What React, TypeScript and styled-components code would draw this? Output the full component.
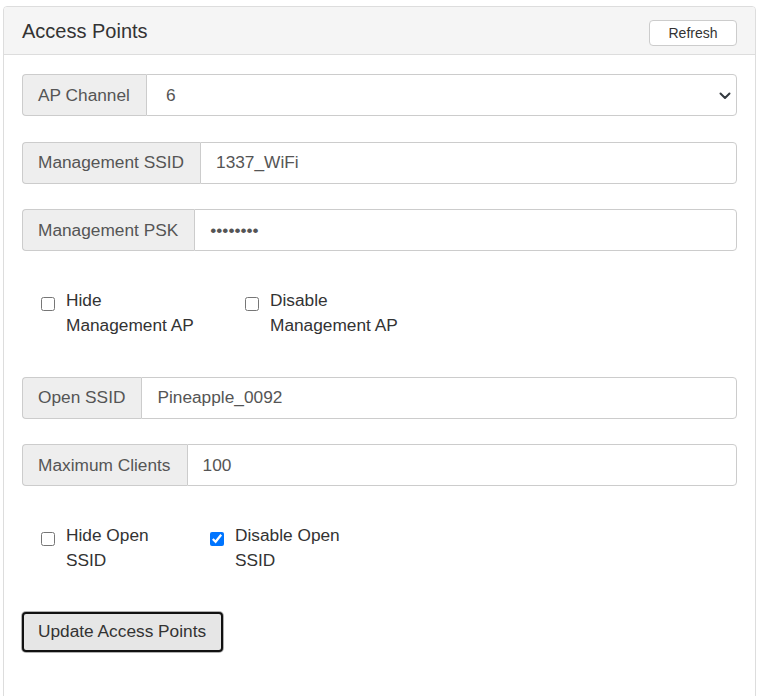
import React from "react";
import styled, { createGlobalStyle } from "styled-components";

const Global = createGlobalStyle`
  html, body { margin: 0; padding: 0; background: #fff; }
  body { font-family: "Liberation Sans", Arial, sans-serif; color: #333; }
  * { box-sizing: border-box; }
`;

const Page = styled.div`
  padding: 6px 3px 0 3px;
  height: 696px;
  overflow: hidden;
`;

const Panel = styled.div`
  border: 1px solid #ddd;
  border-radius: 4px;
  background: #fff;
`;

const Heading = styled.div`
  display: flex;
  align-items: flex-start;
  justify-content: space-between;
  background: #f5f5f5;
  border-bottom: 1px solid #ddd;
  border-radius: 3px 3px 0 0;
  padding: 13px 18px 8px 18px;
`;

const Title = styled.h3`
  margin: 0;
  font-size: 20px;
  line-height: 22px;
  font-weight: 400;
  color: #333;
`;

const SmallButton = styled.button`
  width: 88px;
  height: 26px;
  padding: 0;
  background: #fff;
  border: 1px solid #ccc;
  border-radius: 4px;
  font-family: inherit;
  font-size: 14px;
  color: #333;
`;

const Body = styled.div`
  padding: 19px 18px 60px 18px;
`;

const Group = styled.div`
  display: flex;
  height: 42px;
  margin-bottom: 25.5px;
`;

const Addon = styled.span`
  display: flex;
  align-items: center;
  padding: 0 16px 0 15px;
  background: #eee;
  border: 1px solid #ccc;
  border-right: 0;
  border-radius: 4px 0 0 4px;
  font-size: 17.3px;
  color: #555;
  white-space: nowrap;
`;

const TextInput = styled.input`
  flex: 1;
  min-width: 0;
  height: 100%;
  padding: 0 15px;
  border: 1px solid #ccc;
  border-radius: 0 4px 4px 0;
  font-family: inherit;
  font-size: 17.3px;
  color: #555;
  background: #fff;
  outline: none;
`;

const SelectWrap = styled.div`
  position: relative;
  flex: 1;
  height: 100%;
`;

const Select = styled.select`
  appearance: none;
  -webkit-appearance: none;
  width: 100%;
  height: 100%;
  padding: 0 40px 0 19px;
  border: 1px solid #ccc;
  border-radius: 0 4px 4px 0;
  font-family: inherit;
  font-size: 17.3px;
  color: #555;
  background: #fff;
  outline: none;
`;

const Chevron = styled.svg`
  position: absolute;
  right: 6px;
  top: 18px;
  pointer-events: none;
`;

const CheckRow = styled.div`
  display: flex;
  padding: 11px 0 13.5px 19px;
  margin-bottom: 25.5px;
`;

const CheckItem = styled.label<{ $w?: number }>`
  display: flex;
  align-items: flex-start;
  gap: 11px;
  width: ${(p) => (p.$w ? `${p.$w}px` : "auto")};
  font-size: 17.3px;
  line-height: 25px;
  color: #333;
`;

const Box = styled.input`
  width: 14px;
  height: 14px;
  margin: 9px 0 0 0;
  flex: none;
`;

const UpdateButton = styled.button`
  display: block;
  height: 40px;
  padding: 0 15px 0 14px;
  background: #e6e6e6;
  border: 2px solid #111;
  box-shadow: 0 0 0 1px #b0b0b0;
  border-radius: 4px;
  font-family: inherit;
  font-size: 17.3px;
  color: #333;
`;

export default function App() {
  return (
    <>
      <Global />
      <Page>
        <Panel>
          <Heading>
            <Title>Access Points</Title>
            <SmallButton>Refresh</SmallButton>
          </Heading>
          <Body>
            <Group>
              <Addon>AP Channel</Addon>
              <SelectWrap>
                <Select defaultValue="6">
                  {[1, 2, 3, 4, 5, 6, 7, 8, 9, 10, 11].map((c) => (
                    <option key={c} value={String(c)}>
                      {c}
                    </option>
                  ))}
                </Select>
                <Chevron width="12" height="8" viewBox="0 0 12 8">
                  <path d="M1.5 1.5 L6 6 L10.5 1.5" fill="none" stroke="#343a40" strokeWidth="2" strokeLinecap="round" strokeLinejoin="round" />
                </Chevron>
              </SelectWrap>
            </Group>
            <Group>
              <Addon>Management SSID</Addon>
              <TextInput type="text" defaultValue="1337_WiFi" />
            </Group>
            <Group>
              <Addon>Management PSK</Addon>
              <TextInput type="password" defaultValue="pineappl" />
            </Group>
            <CheckRow>
              <CheckItem $w={204}>
                <Box type="checkbox" />
                <span>
                  Hide
                  <br />
                  Management AP
                </span>
              </CheckItem>
              <CheckItem>
                <Box type="checkbox" />
                <span>
                  Disable
                  <br />
                  Management AP
                </span>
              </CheckItem>
            </CheckRow>
            <Group>
              <Addon>Open SSID</Addon>
              <TextInput type="text" defaultValue="Pineapple_0092" />
            </Group>
            <Group>
              <Addon>Maximum Clients</Addon>
              <TextInput type="text" defaultValue="100" />
            </Group>
            <CheckRow>
              <CheckItem $w={169}>
                <Box type="checkbox" />
                <span>
                  Hide Open
                  <br />
                  SSID
                </span>
              </CheckItem>
              <CheckItem>
                <Box type="checkbox" defaultChecked />
                <span>
                  Disable Open
                  <br />
                  SSID
                </span>
              </CheckItem>
            </CheckRow>
            <UpdateButton>Update Access Points</UpdateButton>
          </Body>
        </Panel>
      </Page>
    </>
  );
}
